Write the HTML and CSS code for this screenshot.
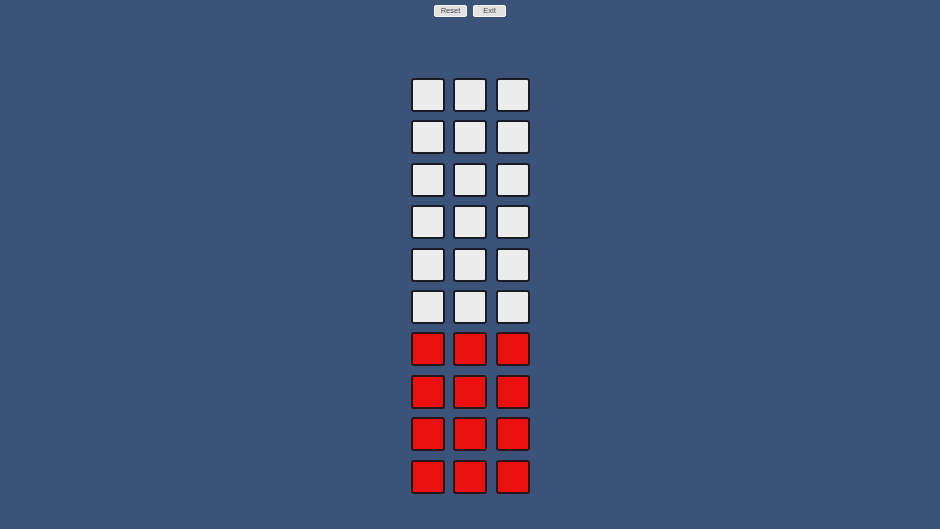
FILE: index.html
```html
<!DOCTYPE html>
<html lang="en">
<head>
  <meta charset="UTF-8" />
  <title>Tiles</title>
  <link rel="stylesheet" href="styles.css">
</head>
<body>
  <div class="toolbar">
    <button class="btn">Reset</button>
    <button class="btn">Exit</button>
  </div>

  <div class="board" id="board"></div>

  <script>
    // 10 rows x 3 columns, bottom four rows are lit
    const board = document.getElementById('board');
    for (let row = 0; row < 10; row++) {
      for (let col = 0; col < 3; col++) {
        const tile = document.createElement('div');
        tile.className = row >= 6 ? 'tile on' : 'tile';
        board.appendChild(tile);
      }
    }
  </script>
</body>
</html>
```

FILE: styles.css
```css
body {
  margin: 0;
  height: 529px;
  background-color: #3c5379;
  font-family: 'Liberation Sans', Arial, sans-serif;
  overflow: hidden;
}

.toolbar {
  display: flex;
  justify-content: center;
  gap: 6px;
  padding-top: 5px;
}

.btn {
  width: 33px;
  height: 12px;
  padding: 0;
  font-family: 'Liberation Sans', Arial, sans-serif;
  font-size: 7.5px;
  line-height: 10px;
  color: #4e4e4e;
  background-color: #e2e2e2;
  border: 1px solid #f4f4f4;
  border-radius: 2px;
}

.board {
  display: grid;
  grid-template-columns: repeat(3, 34px);
  grid-auto-rows: 34px;
  column-gap: 8.5px;
  row-gap: 8.4px;
  justify-content: center;
  margin-top: 61px;
}

.tile {
  box-sizing: border-box;
  background-color: #ececec;
  border: 2px solid #1b1d26;
  border-radius: 3px;
}

.tile.on {
  background-color: #ea1010;
  border-color: #2a1418;
}
```
